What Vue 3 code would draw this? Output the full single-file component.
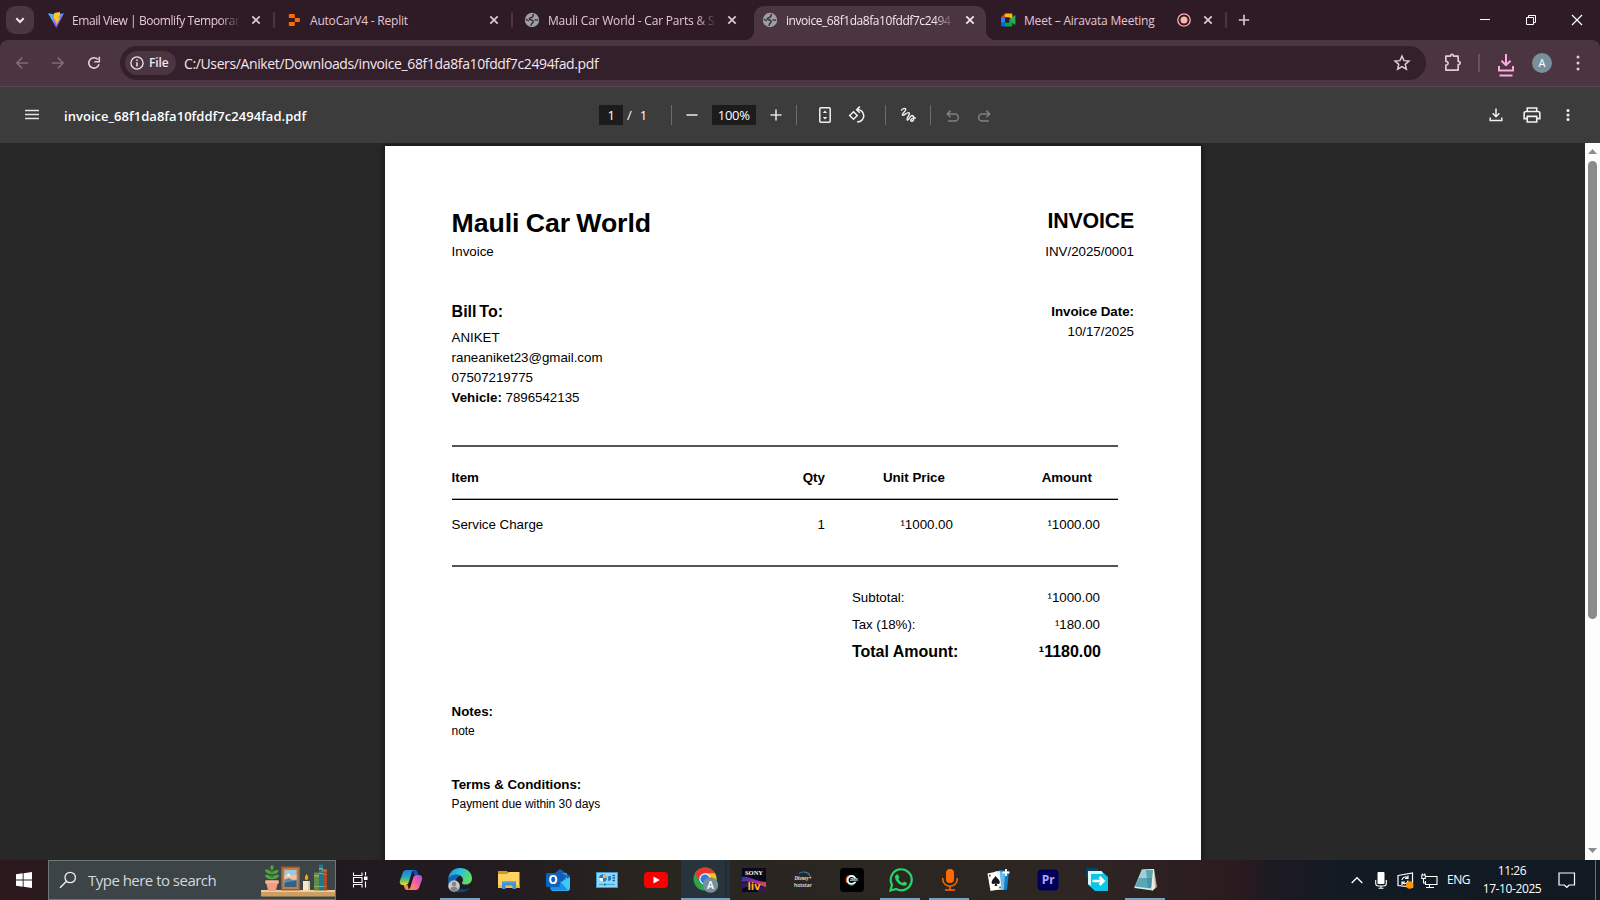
<script setup>
const tabs = [
  { id: 'vite', title: 'Email View | Boomlify Temporar', fade: true, cls: 't0' },
  { id: 'replit', title: 'AutoCarV4 - Replit', cls: 't1' },
  { id: 'globe', title: 'Mauli Car World - Car Parts & S', fade: true, cls: 't2' },
  { id: 'globe', title: 'invoice_68f1da8fa10fddf7c2494', fade: true, active: true, cls: 't3' },
  { id: 'meet', title: 'Meet – Airavata Meeting', rec: true, cls: 't4' },
]
const billTo = ['ANIKET', 'raneaniket23@gmail.com', '07507219775']
const totals = [
  { label: 'Subtotal:', value: '¹1000.00' },
  { label: 'Tax (18%):', value: '¹180.00' },
  { label: 'Total Amount:', value: '¹1180.00', strong: true },
]
</script>

<template>
  <div class="screen">
    <header class="tabstrip">
      <button class="tabsearch">
        <svg width="28" height="28" viewBox="0 0 28 28"><path d="M10.3 12.3l3.7 3.7 3.7-3.7" fill="none" stroke="#f3e4ec" stroke-width="2" /></svg>
      </button>
      <div v-for="(t, i) in tabs" :key="i" class="tab" :class="{ active: t.active, nosep: i === 2 }">
        <svg v-if="t.id === 'vite'" class="fav" viewBox="0 0 16 16">
          <defs><linearGradient id="vg" x1="0" y1="0" x2=".6" y2="1"><stop offset="0" stop-color="#41d1ff" /><stop offset="1" stop-color="#a53cf5" /></linearGradient></defs>
          <path d="M0 1.200L8.300 16 16 1.200 8.300 2.800z" fill="url(#vg)" />
          <path d="M11.800 0L6.200 1.100 5.700 7.600 7.700 7.200 7 10.300 8.600 9.800 7.800 13.500 12.300 6 10.300 6.300 12.300 1.800z" fill="#ffc81e" />
        </svg>
        <svg v-else-if="t.id === 'replit'" class="fav" viewBox="0 0 16 16">
          <path d="M3.600 2h4.400c.5 0 .8.3.8.8v3.300H3.600a.8.8 0 0 1-.8-.8V2.800c0-.5.3-.8.8-.8zM8.800 6.100h4.300c.5 0 .8.3.8.8v2.400c0 .5-.3.8-.8.8H8.800zM3.600 10.100h5.200v3.200c0 .5-.3.8-.8.8H3.600a.8.8 0 0 1-.8-.8v-2.400c0-.5.3-.8.8-.8z" fill="#ff6a00" />
        </svg>
        <svg v-else-if="t.id === 'globe'" class="fav" viewBox="0 0 16 16">
          <circle cx="8" cy="8" r="7.200" fill="#9aa0a6" />
          <path d="M9.800 2.200C8.500 3.200 9.500 4.300 8.200 5.200 7 6 5.500 5.600 5.300 6.800c-.1 1 1.500.8 2.700 1.300 1.500.6 1.300 2.200.2 3-.9.600-1.200 1.500-1 2.700" fill="none" stroke="#3f2b36" stroke-width="1.500" />
          <path d="M1.800 7.200c1 1 2.200 1 3 1.800M10.500 8.200c1.100-.5 2.400.2 3.700-.3" fill="none" stroke="#3f2b36" stroke-width="1.300" />
        </svg>
        <svg v-else class="fav" viewBox="0 0 16 16">
          <path d="M5 1.500V5.200H1z" fill="#ea4335" />
          <path d="M5 1.500h6.200c.7 0 1.200.5 1.200 1.200V8L9.200 5.200H5z" fill="#ffba00" />
          <path d="M1 5.200h4v5.600H1z" fill="#2684fc" />
          <path d="M1 10.800h4v3.700H2.200A1.200 1.200 0 0 1 1 13.300z" fill="#0066da" />
          <path d="M5 10.800h4.200V8l3.200 2.600v2.700c0 .7-.5 1.200-1.200 1.200H5z" fill="#00ac47" />
          <path d="M9.200 8l5.300-4.600c.4-.3.900-.1.900.4v8.400c0 .5-.5.700-.9.400z" fill="#2cb053" />
        </svg>
        <span class="ttl" :class="[{ fade: t.fade }, t.cls]">{{ t.title }}</span>
        <svg v-if="t.rec" class="rec" viewBox="0 0 16 16"><circle cx="8" cy="8" r="6.200" fill="none" stroke="#ffb4ab" stroke-width="1.300" /><circle cx="8" cy="8" r="3.500" fill="#ffb4ab" /></svg>
        <svg class="x" viewBox="0 0 16 16"><path d="M4.300 4.300l7.400 7.400M11.700 4.300l-7.400 7.400" fill="none" stroke="currentColor" stroke-width="1.700" /></svg>
      </div>
      <svg class="plus" viewBox="0 0 16 16"><path d="M8 2.800v10.400M2.800 8h10.400" fill="none" stroke="#e6c6d6" stroke-width="1.600" /></svg>
      <div class="wincontrols">
        <svg width="46" height="40" viewBox="0 0 46 40"><path d="M18 19.500h10" stroke="#fff" stroke-width="1" /></svg>
        <svg width="46" height="40" viewBox="0 0 46 40"><path d="M18.500 17.500h7v7h-7zM20.500 17.500v-2h7v7h-2" fill="none" stroke="#fff" /></svg>
        <svg width="46" height="40" viewBox="0 0 46 40"><path d="M18 15l10 10M28 15l-10 10" fill="none" stroke="#fff" stroke-width="1.200" /></svg>
      </div>
    </header>

    <nav class="navbar">
      <svg class="nav dim" viewBox="0 0 16 16"><path d="M14 8H3M8.200 2.600L2.800 8l5.400 5.400" fill="none" stroke="currentColor" stroke-width="1.600" /></svg>
      <svg class="nav dim" viewBox="0 0 16 16"><path d="M2 8h11M7.800 2.600L13.200 8l-5.400 5.400" fill="none" stroke="currentColor" stroke-width="1.600" /></svg>
      <svg class="nav" viewBox="0 0 16 16"><path d="M13 9.200A5.200 5.200 0 1 1 12 4.600" fill="none" stroke="currentColor" stroke-width="1.600" /><path d="M13.300 1.800v5H8.300" fill="none" stroke="currentColor" stroke-width="1.600" /></svg>
      <div class="omnibox">
        <div class="chip">
          <svg width="14" height="14" viewBox="0 0 14 14"><circle cx="7" cy="7" r="6.100" fill="none" stroke="#f1e2ea" stroke-width="1.300" /><path d="M7 6.200v4.200M7 3.400v1.500" stroke="#f1e2ea" stroke-width="1.500" /></svg>
          <span>File</span>
        </div>
        <span class="url">C:/Users/Aniket/Downloads/invoice_68f1da8fa10fddf7c2494fad.pdf</span>
        <svg class="star" viewBox="0 0 16 16"><path d="M8 1.900l1.800 4 4.400.4-3.300 2.900 1 4.300L8 11.200l-3.900 2.300 1-4.300-3.300-2.900 4.400-.4z" fill="none" stroke="#e6cbd8" stroke-width="1.300" /></svg>
      </div>
      <svg class="puzzle" viewBox="0 0 18 20"><path d="M2.500 3.800h4.300c-.3-2.100 3-2.100 2.700 0h4.200v4.700c2.400-.2 2.400 3.300 0 3v5H2.500v-4.700c2.700.2 2.700-3.400 0-3.300z" fill="none" stroke="#e6cbd8" stroke-width="1.500" stroke-linejoin="round" /></svg>
      <i class="vline"></i>
      <svg class="dl" viewBox="0 0 18 26"><path d="M9 2v11M4.500 8.700L9 13.200l4.500-4.500M2 14v4.500h14V14M2.500 23.500h13" fill="none" stroke="#ffa9e2" stroke-width="2" /></svg>
      <div class="avatar">A</div>
      <svg class="dots" viewBox="0 0 6 18"><circle cx="3" cy="3" r="1.500" /><circle cx="3" cy="9" r="1.500" /><circle cx="3" cy="15" r="1.500" /></svg>
    </nav>

    <section class="pdfbar">
      <svg class="burger" viewBox="0 0 14 12"><path d="M0 1.500h14M0 5.500h14M0 9.500h14" stroke="#e4e4e4" stroke-width="1.500" /></svg>
      <strong class="fname">invoice_68f1da8fa10fddf7c2494fad.pdf</strong>
      <div class="tools">
        <span class="box pg">1</span><span class="of">/</span><span class="tot">1</span>
        <i class="sep s1"></i>
        <svg class="ic12 minus" viewBox="0 0 12 12"><path d="M.5 6h11" stroke="#e0e0e0" stroke-width="1.600" /></svg>
        <span class="box zoom">100%</span>
        <svg class="ic12 add" viewBox="0 0 12 12"><path d="M.5 6h11M6 .5v11" stroke="#e0e0e0" stroke-width="1.600" /></svg>
        <i class="sep s2"></i>
        <svg class="fit" viewBox="0 0 14 18"><rect x="1.800" y="1.800" width="10.400" height="14.400" rx="1" fill="none" stroke="#f1f1f1" stroke-width="1.500" /><path d="M7 4.500L9.200 7H4.800zM7 13.500L9.200 11H4.800z" fill="#f1f1f1" /></svg>
        <svg class="rot" viewBox="0 0 18 18"><path d="M5.500 5.700L9.300 9.500 5.500 13.300 1.700 9.500z" fill="none" stroke="#f1f1f1" stroke-width="1.500" /><path d="M8.500 3.600a6.200 6.200 0 1 1 .7 12.300M11.800.6L8.700 3.700l3.100 3" fill="none" stroke="#f1f1f1" stroke-width="1.600" /></svg>
        <i class="sep s3"></i>
        <svg class="draw" viewBox="0 0 16 16"><path d="M1.500 3.200C3 1.200 5.800.6 5.700 2.700 5.500 4.700 1.600 6.200 2.400 8c1.100 1.500 4.700-3.400 6.700-2.200 1.800 1.500-3.200 4.900-1.900 7 1.300 1.600 2.500-4.500 5-4.300 2.500.5 2 5.300-.1 5.700-2.400.2-1.800-3.300 3.200-3.200" fill="none" stroke="#f1f1f1" stroke-width="1.400" stroke-linecap="round" /></svg>
        <i class="sep s4"></i>
        <svg class="undo" viewBox="0 0 12 12"><path d="M2 11h6.200a2.900 2.900 0 0 0 0-6.400H1.400M4.200 1.500L1.200 4.600l3 3" fill="none" stroke="#818181" stroke-width="1.400" /></svg>
        <svg class="redo" viewBox="0 0 12 12"><path d="M10 11H3.800a2.900 2.900 0 0 1 0-6.400h6.800M7.800 1.500l3 3.100-3 3" fill="none" stroke="#818181" stroke-width="1.400" /></svg>
      </div>
      <svg class="pdl" viewBox="0 0 14 14"><path d="M7 .5v8M3.600 5.300L7 8.700l3.400-3.400M1.200 9.500V12.400h11.600V9.500" fill="none" stroke="#f1f1f1" stroke-width="1.500" /></svg>
      <svg class="print" viewBox="0 0 16 16"><path d="M3.800 4.800V1.700h8.400v3.100M3.700 11.200H1V6.600c0-1 .7-1.700 1.700-1.700h10.600c1 0 1.700.7 1.700 1.700v4.600h-2.700M3.800 9.200h8.400v5H3.800z" fill="none" stroke="#f1f1f1" stroke-width="1.400" /></svg>
      <svg class="pdots" viewBox="0 0 4 14"><circle cx="2" cy="2.500" r="1.500" /><circle cx="2" cy="7" r="1.500" /><circle cx="2" cy="11.500" r="1.500" /></svg>
    </section>

    <main class="viewer">
      <article class="page">
        <div class="row head">
          <div><h1>Mauli Car World</h1><p>Invoice</p></div>
          <div class="r"><h2>INVOICE</h2><p>INV/2025/0001</p></div>
        </div>
        <div class="row bill">
          <div>
            <h3>Bill To:</h3>
            <p v-for="l in billTo" :key="l">{{ l }}</p>
            <p><b>Vehicle:</b> 7896542135</p>
          </div>
          <div class="r"><p><b>Invoice Date:</b></p><p>10/17/2025</p></div>
        </div>
        <div class="table">
          <div class="tr th"><span>Item</span><span>Qty</span><span>Unit Price</span><span>Amount</span></div>
          <div class="tr td"><span>Service Charge</span><span>1</span><span>¹1000.00</span><span>¹1000.00</span></div>
        </div>
        <div class="totals">
          <div v-for="t in totals" :key="t.label" :class="{ strong: t.strong }"><span>{{ t.label }}</span><span>{{ t.value }}</span></div>
        </div>
        <div class="note"><p><b>Notes:</b></p><p class="sm">note</p></div>
        <div class="note terms"><p><b>Terms &amp; Conditions:</b></p><p class="sm">Payment due within 30 days</p></div>
      </article>
      <div class="scrollbar">
        <svg width="15" height="18" viewBox="0 0 15 18"><path d="M3 11h9L7.500 6z" fill="#8b8b8b" /></svg>
        <div class="thumb"></div>
        <svg class="down" width="15" height="18" viewBox="0 0 15 18"><path d="M3 6h9l-4.500 5z" fill="#8b8b8b" /></svg>
      </div>
    </main>

    <footer class="taskbar">
      <div class="start"><svg width="16" height="16" viewBox="0 0 16 16"><path d="M0 2.200L6.700 1.300V7.500H0zM7.600 1.200L16 0v7.500H7.600zM0 8.400h6.700v6.300L0 13.800zM7.600 8.400H16V16l-8.400-1.200z" fill="#fff" /></svg></div>
      <div class="search">
        <svg width="18" height="18" viewBox="0 0 18 18"><circle cx="11.200" cy="6.500" r="5.200" fill="none" stroke="#f0f0f0" stroke-width="1.300" /><path d="M7.500 10.300L1 16.700" stroke="#f0f0f0" stroke-width="1.400" /></svg>
        <span>Type here to search</span>
        <svg class="shelf" width="74" height="36" viewBox="0 0 74 36">
          <path d="M0 27h74v2H0z" fill="#f1cd97" /><path d="M0 29h74v4.500H0z" fill="#cf9f62" />
          <path d="M11 20V6" stroke="#3b8b34" stroke-width="1.300" />
          <path d="M11 7c-2.500-1.500-2-4 0-5 2 1 2.500 3.500 0 5zM11 11C6 11.500 4 8.500 4 6.500 7.500 6 10.500 8 11 11zM11 11c.5-3 3.500-4.500 6.500-4C17.500 10 15 11.500 11 11zM11 16c-5 .5-6.500-2-7-4 3.500-.8 6.500.5 7 4zM11 16c.5-3.500 3.500-5 7-4-.5 3-3 4.500-7 4z" fill="#4fa63b" />
          <path d="M4.500 17.500h13v3.500h-1l-1.700 7H7.200l-1.700-7h-1z" fill="#eda184" /><path d="M4.500 17.500h13V20h-13z" fill="#f6b89c" />
          <path d="M20 3.500h19v24H20z" fill="#9a5d31" /><path d="M21.500 5h16v21h-16z" fill="#bd8049" /><path d="M23.500 7h12v17h-12z" fill="#9fc8dc" />
          <path d="M23.500 12h12v4h-12z" fill="#f7c2a0" /><circle cx="27.500" cy="12" r="1.500" fill="#fff1d0" /><path d="M23.500 17l4-2 8 4v5h-12z" fill="#5b8aa5" /><path d="M23.500 20l12-3v7h-12z" fill="#365f80" />
          <path d="M42 18h7v9.500h-7z" fill="#f6e7c7" /><path d="M47 18h2v9.500h-2z" fill="#dec9a0" /><path d="M45.500 11c2.700 3 2 6 0 6s-2.500-2.500 0-6z" fill="#ff9c22" />
          <path d="M53 9.500h5v18h-5z" fill="#5f8c4c" /><path d="M58 1.500h4v26h-4z" fill="#24758a" /><path d="M58 5h4v1.500h-4zM58 10h4v1h-4zM58 23h4v1h-4z" fill="#62b8bd" /><path d="M62 6.500h4v21h-4z" fill="#a64b2d" /><path d="M60.800 6.500h5v2h-5z" fill="#d06d35" /><path d="M62.300 11h3.400v1h-3.400zM62.300 23h3.400v1h-3.400z" fill="#d06d35" /><path d="M53 12h5v1.500h-5zM53 23h5v1h-5z" fill="#91ae6d" />
        </svg>
      </div>
      <div class="cell tv"><svg width="17" height="16" viewBox="0 0 17 16"><path d="M1.500.5v3h8.500v-3M1.500 15.500v-3h8.500v3M1.500 5.500h8.500v5H1.500zM13.500 0v3.500M13.500 9.500V15.500" fill="none" stroke="#fff" stroke-width="1.100" /><path d="M12 4.500h3.500V8H12z" fill="#fff" /></svg></div>
      <div class="cell"><svg width="24" height="24" viewBox="0 0 24 24">
        <defs>
          <linearGradient id="c1" x1="0" y1="0" x2="0" y2="1"><stop offset="0" stop-color="#1f7ee0" /><stop offset=".45" stop-color="#22a7c9" /><stop offset=".75" stop-color="#83c44c" /><stop offset="1" stop-color="#ffd33c" /></linearGradient>
          <linearGradient id="c2" x1="1" y1="0" x2="0" y2="1"><stop offset="0" stop-color="#a64de8" /><stop offset=".5" stop-color="#f26595" /><stop offset="1" stop-color="#ffa052" /></linearGradient>
        </defs>
        <path d="M14 2h2c1.600 0 2.200 1.200 2.700 2.700L19.300 7h-3.800z" fill="#1750c6" />
        <path d="M7.500 2h8.200c-2 0-2.800 1.700-3.300 3.500L10 13.600C9.500 15.500 8.400 17 6.300 17H4c-2.500 0-3.800-2-3-4.600L3.700 5C4.300 3.200 5.400 2 7.500 2z" fill="url(#c1)" />
        <path d="M16.500 22H8.300c2 0 2.800-1.700 3.300-3.500L14 10.400C14.500 8.500 15.600 7 17.700 7H20c2.500 0 3.600 2 3 4.600L20.300 19c-.6 1.800-1.700 3-3.800 3z" fill="url(#c2)" />
        <path d="M10 22H8c-1.600 0-2.200-1.200-2.700-2.700L4.700 17h3.800z" fill="#ff8a45" />
      </svg></div>
      <div class="cell run"><svg width="24" height="24" viewBox="0 0 24 24">
        <defs><linearGradient id="e1" x1="0" y1="0" x2="1" y2=".4"><stop offset="0" stop-color="#1c8fdd" /><stop offset=".5" stop-color="#2fc0dc" /><stop offset="1" stop-color="#5fdc63" /></linearGradient></defs>
        <path d="M.2 11C.8 4.600 5.500 0 12 0c7 0 12 4.800 12 10.200 0 4-3 6.300-6.300 6.300-2.600 0-4-.9-3.700-1.800.4-.9 1.200-1.500 1-3.400C14.500 8.500 11.800 6.600 8.500 6.700 4.500 6.700 1 9 .2 11z" fill="url(#e1)" />
        <path d="M.2 11C1 8.500 4.500 6.700 8.500 6.700c1.700 0 3.300.5 4.500 1.400-3.200-.2-5 2.500-5 5.400 0 5 4 8.400 8.500 8.300 2 0 3.800-.6 5.300-1.500C19.800 22.600 16 24 12 24 5 24-.6 18.200.2 11z" fill="#1064b8" />
        <path d="M8 13.500c0 5 4 8.400 8.500 8.300 2.600-.1 4-.8 5.300-1.600-2 3-6 3.900-9.500 3.800C8 22.500 6.500 17 8 13.500z" fill="#0b4186" />
        <circle cx="6" cy="18" r="5.800" fill="#c9c9c9" /><circle cx="6" cy="16" r="2.300" fill="#858585" /><path d="M2.200 21.500c.4-4 7.200-4 7.600 0-2 2-5.600 2-7.600 0z" fill="#858585" />
      </svg></div>
      <div class="cell"><svg width="24" height="24" viewBox="0 0 24 24"><path d="M1 3h9l2 2.500H1z" fill="#d99a18" /><path d="M1 5.500L10 5.500 12 4h10.500v16H1z" fill="#ffd35e" /><path d="M1 17h21.500v3H1z" fill="#f4bd3e" /><path d="M5 21v-8h14v8h-3.500v-3.500h-7V21z" fill="#3d93d8" /><path d="M5 13h14v1.500H5z" fill="#62aee6" /></svg></div>
      <div class="cell"><svg width="24" height="24" viewBox="0 0 24 24"><path d="M4 9L14 1l10 7v4H4z" fill="#1b5fb5" /><path d="M5 5h16v12H5z" fill="#2a9be8" /><path d="M12 3l9 5-6 7-7-5z" fill="#155bb0" /><path d="M24 9v11c0 1.700-1 3-3 3H6l-2-3L24 9z" fill="#40c8f4" /><path d="M4 20l10-7 8 9.500H6z" fill="#1d8fe3" /><rect x="0" y="5" width="14" height="14" rx="1.500" fill="#0c62c1" /><text x="7" y="16.200" text-anchor="middle" class="glyph" font-size="11.500" font-weight="700" fill="#fff">O</text></svg></div>
      <div class="cell"><svg width="24" height="24" viewBox="0 0 24 24"><rect x="1.500" y="4.500" width="21" height="15" fill="#8fd8fb" stroke="#3c9bd0" /><circle cx="8" cy="10" r="3.800" fill="#2379c4" /><path d="M8 10V6.200a3.800 3.800 0 0 1 3.800 3.800z" fill="#f7b53c" /><path d="M8 10v3.800A3.800 3.800 0 0 1 4.200 10z" fill="#fff" /><path d="M14 13V9h2M14 11h2M17.500 7.500H20M17.500 10H20M17.500 12.500H20" stroke="#1269ad" fill="none" stroke-width="1.400" /><path d="M4 16.500h16" stroke="#4aa7d9" stroke-width="1.200" /><path d="M10 15.500v2" stroke="#1269ad" stroke-width="1.500" /></svg></div>
      <div class="cell"><svg width="24" height="24" viewBox="0 0 24 24"><rect x="0" y="4" width="24" height="16" rx="4" fill="#f80000" /><path d="M9.500 8.500v7L15.800 12z" fill="#fff" /></svg></div>
      <div class="cell chrome"><svg width="26" height="26" viewBox="0 0 26 26">
        <circle cx="13" cy="12" r="11.500" fill="#2fa24b" /><path d="M3 6.300A11.500 11.500 0 0 1 23 6.300L13 7.500 8 15z" fill="#e6382e" /><path d="M23 6.300A11.500 11.500 0 0 1 13 23.500l5-8.700-5-8.500z" fill="#fcc21b" /><circle cx="13" cy="12" r="5.700" fill="#fff" /><circle cx="13" cy="12" r="4.500" fill="#3079ea" />
        <circle cx="18.500" cy="18" r="7.700" fill="#78909c" /><text x="18.500" y="21.800" text-anchor="middle" class="glyph" font-size="10.500" font-weight="600" fill="#fff">A</text>
      </svg></div>
      <div class="cell"><svg width="24" height="24" viewBox="0 0 24 24">
        <defs><linearGradient id="sl" x1="0" y1="0" x2="1" y2="1"><stop offset="0" stop-color="#2338a5" /><stop offset=".5" stop-color="#9a2ba8" /><stop offset="1" stop-color="#f0562d" /></linearGradient></defs>
        <path d="M0 0h24v24H0z" fill="#090819" /><path d="M0 9c8-1 11 4 24 5v5C14 17 9 12 0 14z" fill="url(#sl)" /><path d="M0 15c5-3 11 5 24 4v5h-7C12 20 7 17 0 21z" fill="#3b1660" /><text x="12" y="7" text-anchor="middle" class="serif" font-size="6" font-weight="700" fill="#fff" textLength="18" lengthAdjust="spacingAndGlyphs">SONY</text><text x="12" y="22" text-anchor="middle" class="glyph" font-size="11" font-weight="700" fill="#ffb51e" textLength="13" lengthAdjust="spacingAndGlyphs">liv</text>
      </svg></div>
      <div class="cell"><svg width="24" height="24" viewBox="0 0 24 24"><path d="M8 5.500C12.500 2.500 18.500 4.500 18.800 8" fill="none" stroke="#2384ad" stroke-width="1.200" /><text x="12" y="12" text-anchor="middle" class="serif" font-style="italic" font-size="6.500" font-weight="700" fill="#e8e8ea" textLength="17" lengthAdjust="spacingAndGlyphs">Disney+</text><text x="12" y="18.500" text-anchor="middle" class="glyph" font-size="5.800" font-weight="600" fill="#e8e8ea" textLength="18" lengthAdjust="spacingAndGlyphs">hotstar</text></svg></div>
      <div class="cell"><svg width="24" height="24" viewBox="0 0 24 24"><rect width="24" height="24" rx="3.500" fill="#000" /><circle cx="11.500" cy="12" r="4" fill="none" stroke="#fff" stroke-width="2.200" /><path d="M8.500 7.500a5.400 5.400 0 0 0-1.500 7.500" fill="none" stroke="#e4572e" stroke-width="1.200" /><path d="M8.500 16.300a5.200 5.200 0 0 0 5 .5" fill="none" stroke="#39a56a" stroke-width="1" /><path d="M11 10.300h7v3.400h-7z" fill="#000" /><text x="14" y="13.300" text-anchor="middle" class="glyph" font-size="3.500" font-weight="700" fill="#fff">ZEE5</text></svg></div>
      <div class="cell run"><svg width="24" height="24" viewBox="0 0 24 24"><path d="M1.500 22.500l1.500-5.700A10.500 10.500 0 1 1 7.200 21z" fill="none" stroke="#25d366" stroke-width="2.200" /><path d="M7.500 6.500h1.600l1.300 3-1 1.500c1 2 2.200 3.200 4.200 4l1.500-1.500 2.900 1.400c0 2-1.600 3.100-3.300 2.900C10 17 6.200 12.800 6 9.300c0-1.200.6-2.200 1.500-2.800z" fill="#25d366" /></svg></div>
      <div class="cell run"><svg width="24" height="24" viewBox="0 0 24 24"><rect x="8" y="1" width="8" height="14" rx="4" fill="#ff6a00" /><path d="M4.800 10v1.500a7.200 6.700 0 0 0 14.400 0V10M12 18.500V22M7 22h10" fill="none" stroke="#ff6a00" stroke-width="1.500" /></svg></div>
      <div class="cell"><svg width="26" height="24" viewBox="0 0 26 24"><path d="M13 2l10 1-2 19-10-1z" fill="#177bc6" /><path d="M9 3l10 1-1 18H8z" fill="#65bcf0" /><path d="M1.500 5.500L13.500 3l2 18-11 2z" fill="#fff" /><path d="M9.500 8c2 2.500 4.500 4 4.300 6.500-.2 1.700-2.300 2-3.300.8l.8 2.700H8.500l.8-2.700c-1 1.200-3.500.9-3.700-.8C5.400 12 8 10.500 9.500 8z" fill="#16181d" /><path d="M3 6.800l1.500-.3.200 2-1.400.2zM13.300 18.500l1.300-.2.200 2-1.300.2z" fill="#333" /><path d="M20 1v7M16.500 4.500h7" stroke="#fff" stroke-width="1.800" /></svg></div>
      <div class="cell"><svg width="24" height="24" viewBox="0 0 24 24"><rect x="1.500" y="1.500" width="21" height="21" rx="4" fill="#00005b" /><text x="12.300" y="15.800" text-anchor="middle" class="glyph" font-size="12" font-weight="700" fill="#b3a4ff" textLength="13">Pr</text></svg></div>
      <div class="cell"><svg width="24" height="24" viewBox="0 0 24 24"><path d="M1 0h12v4H6v11L1 9z" fill="#0e4264" /><path d="M3 3h13.500l6.500 6v14H10L3 16.500z" fill="#0cc6e6" /><path d="M3 3h13.500l1.500 3H6v12l-3-2z" fill="#d7f8fd" /><path d="M7.500 13h10.500M14.500 9l4 4-4 4" fill="none" stroke="#fff" stroke-width="2.600" /></svg></div>
      <div class="cell run"><svg width="24" height="24" viewBox="0 0 24 24"><path d="M8 2l12-1 3 18-5 4z" fill="#c7a66b" /><path d="M7.500 1.500L20 1l1 19-3 3z" fill="#e2eef0" /><path d="M7.500 2L19 2l-2 19L.5 19z" fill="#9fd0da" /><path d="M5 10l13 0-1 11L.5 19z" fill="#5ba5b5" /><path d="M12 2h7l-2 19-3-.3z" fill="#388998" opacity=".6" /><path d="M.5 18.500L17 20.500v1.700L.5 20z" fill="#d6eff3" /></svg></div>
      <div class="tray">
        <svg class="chev" width="12" height="8" viewBox="0 0 12 8"><path d="M.7 7L6 1.700 11.300 7" fill="none" stroke="#fff" stroke-width="1.300" /></svg>
        <svg class="mic" width="12" height="17" viewBox="0 0 12 17"><rect x="2.500" y="0" width="7" height="12" rx="1" fill="#fff" /><path d="M.7 8v3.500c0 1.500 1 2.500 2.800 2.500h5c1.800 0 2.800-1 2.800-2.500V8M6 14v2M3.500 16.200h5" fill="none" stroke="#fff" stroke-width="1.100" /></svg>
        <svg class="sync" width="17" height="17" viewBox="0 0 17 17"><path d="M1 3.500L15.500 1v14L1 13.500z" fill="none" stroke="#fff" stroke-width="1.200" /><path d="M5 8a3.300 3.300 0 0 1 5.500-2.200M11 3.500v3H8M11 8.500a3.300 3.300 0 0 1-5.500 2.200M5 13v-3h3" fill="none" stroke="#fff" stroke-width="1.200" /><circle cx="12.700" cy="13" r="3.700" fill="#ff9800" /></svg>
        <svg class="net" width="17" height="16" viewBox="0 0 17 16"><path d="M5 3.500h11v8H4.500V8M8.500 11.500v3M5 14.500h8M.8 2h3.500v3.500H.8zM2.500 5.500V10H5M1.500.5v1.500M3.700.5v1.500" fill="none" stroke="#fff" stroke-width="1.100" /></svg>
        <span class="eng">ENG</span>
        <div class="clock"><span>11:26</span><span class="date">17-10-2025</span></div>
        <svg class="act" width="18" height="17" viewBox="0 0 18 17"><path d="M1 1h15.500v12h-5.300L8.800 15.300 6.400 13H1z" fill="none" stroke="#fff" stroke-width="1.200" /></svg>
        <i class="peek"></i>
      </div>
    </footer>
  </div>
</template>

<style>
html, body { margin: 0; background: #282828; overflow: hidden; }
</style>

<style scoped>
* { box-sizing: border-box; }
svg { display: block; flex: none; overflow: visible; }
p, h1, h2, h3 { margin: 0; }
.screen { width: 1600px; height: 900px; display: flex; flex-direction: column; overflow: hidden; font-family: "Open Sans", "Noto Sans", sans-serif; }
.glyph { font-family: "Open Sans", sans-serif; }
.serif { font-family: "Liberation Serif", serif; }

.tabstrip { height: 50px; margin-bottom: -10px; padding-bottom: 10px; display: flex; align-items: center; background: #2e1b26; color: #e6c6d6; flex: none; }
.tabsearch { width: 28px; height: 28px; margin: 0 3px 0 6px; padding: 0; border: 0; border-radius: 9px; background: #4b3541; flex: none; }
.tab { position: relative; width: 238px; height: 40px; padding-left: 11px; display: flex; align-items: center; flex: none; }
.tab:not(.active):not(.nosep)::after { content: ""; position: absolute; right: 0; top: 12px; width: 2px; height: 16px; background: #4b3541; border-radius: 1px; }
.fav { width: 16px; height: 16px; margin-right: 8px; }
.ttl { width: 167px; font-size: 12px; line-height: 20px; white-space: nowrap; letter-spacing: -.2px; padding-top: 1px; }
.t0, .t3 { letter-spacing: -.44px; }
.fade { -webkit-mask-image: linear-gradient(90deg, #000 148px, transparent 169px); mask-image: linear-gradient(90deg, #000 148px, transparent 169px); }
.x { width: 16px; height: 16px; margin-left: 9px; }
.t4 { width: 152px; }
.rec { width: 16px; height: 16px; }
.rec + .x { margin-left: 8px; }
.active { color: #f5e6ee; }
.active > * { z-index: 1; }
.active::before { content: ""; position: absolute; left: 3px; right: 3px; top: 6px; bottom: 0; background: #4b3541; border-radius: 10px 10px 0 0; }
.active::after { content: ""; position: absolute; left: -7px; right: -7px; bottom: 0; height: 10px; background: radial-gradient(circle at 0 0, transparent 10px, #4b3541 10.500px) left / 10px 10px no-repeat, radial-gradient(circle at 100% 0, transparent 10px, #4b3541 10.500px) right / 10px 10px no-repeat; }
.plus { width: 16px; height: 16px; margin-left: 9px; }
.wincontrols { display: flex; margin-left: auto; }

.navbar { height: 47px; display: flex; align-items: center; background: #4b3541; border-bottom: 1px solid #5b4652; border-radius: 8px 8px 0 0; color: #e6cbd8; padding-bottom: 1px; padding-top: 1px; flex: none; position: relative; }
.nav { width: 16px; height: 16px; margin-left: 14px; margin-right: 6px; }
.nav + .nav { margin-left: 14px; }
.dim { color: #806a76; }
.omnibox { width: 1306px; height: 34px; margin-left: 12px; border-radius: 17px; background: #33202b; display: flex; align-items: center; padding-left: 5px; flex: none; }
.chip { width: 51px; height: 24px; border-radius: 12px; background: #4b3541; display: flex; align-items: center; padding-left: 5px; color: #f5e6ee; font-size: 12px; font-weight: 600; letter-spacing: -.1px; }
.chip span { margin-left: 5px; line-height: 20px; }
.url { margin-left: 8px; font-size: 14px; letter-spacing: -.375px; line-height: 24px; padding-top: 1px; color: #f5e6ee; white-space: nowrap; }
.star { width: 18px; height: 18px; margin-left: auto; margin-right: 15px; }
.puzzle { width: 20px; height: 22px; margin-left: 17px; }
.vline { width: 2px; height: 18px; background: #6a5060; margin-left: 15px; }
.dl { width: 18px; height: 26px; margin-left: 17px; margin-top: 3px; }
.avatar { width: 20px; height: 20px; border-radius: 50%; background: #78909c; color: #fff; font-size: 11px; text-align: center; line-height: 20px; margin-left: 17px; }
.dots { width: 6px; height: 18px; margin-left: 23px; fill: #e6cbd8; }

.pdfbar { height: 56px; background: #3c3c3c; display: flex; align-items: center; color: #fff; flex: none; padding-right: 30px; }
.burger { width: 14px; height: 12px; margin-left: 25px; }
.fname { margin-left: 25px; width: 535px; font-size: 13px; font-weight: 600; letter-spacing: .03px; line-height: 20px; padding-top: 1px; }
.tools { display: flex; align-items: center; height: 20px; flex: 1; font-size: 13px; line-height: 20px; }
.box { height: 20px; background: #1c1c1c; text-align: center; letter-spacing: -.3px; }
.pg { width: 24px; } .of { margin-left: 4px; } .tot { margin-left: 8px; width: 8px; }
.zoom { width: 44px; }
.sep { width: 1px; height: 20px; background: #6c6c6c; }
.s1 { margin-left: 23px; }
.ic12 { width: 12px; height: 12px; }
.minus { margin: 0 14px; } .add { margin-left: 14px; }
.s2 { margin-left: 14px; }
.fit { width: 14px; height: 18px; margin-left: 21px; }
.rot { width: 18px; height: 18px; margin-left: 16px; }
.s3 { margin-left: 19px; }
.draw { width: 16px; height: 16px; margin-left: 14px; }
.s4 { margin-left: 14px; }
.undo { width: 13px; height: 13px; margin-left: 15px; margin-top: 1px; }
.redo { width: 13px; height: 13px; margin-left: 19px; margin-top: 1px; }
.pdl { width: 14px; height: 14px; }
.print { width: 18px; height: 18px; margin-left: 20px; }
.pdots { width: 4px; height: 14px; margin-left: 25px; fill: #f1f1f1; }

.viewer { flex: 1; min-height: 0; display: flex; background: #282828; padding-left: 385px; overflow: hidden; }
.page { width: 816px; height: 1056px; margin-top: 3px; padding: 60px 67px 0 66.600px; background: #fff; color: #000; box-shadow: 0 0 6px 1px rgba(0, 0, 0, .5); font-family: "Liberation Sans", Arial, sans-serif; font-size: 13.330px; line-height: 20px; letter-spacing: -.02px; flex: none; }
.row { display: flex; justify-content: space-between; }
.r { text-align: right; }
.head { height: 96px; }
h1 { font-size: 26.670px; line-height: 30px; margin: 2px 0 4px; word-spacing: -1px; letter-spacing: -.07px; }
h2 { font-size: 21.330px; line-height: 30px; margin-bottom: 6px; letter-spacing: -.18px; }
h3 { font-size: 16px; line-height: 20px; margin-bottom: 6px; word-spacing: -1.500px; }
.bill { height: 143px; }
.table { width: 666.500px; border-top: 2px solid #555; border-bottom: 2px solid #555; }
.tr { display: grid; grid-template-columns: 300px 73.300px 128px 147px; }
.tr span:not(:first-child) { text-align: right; }
.th { font-weight: 700; padding: 21px 0 10px; border-bottom: 1px solid #000; box-shadow: inset 0 -1px #aaa; height: 53px; }
.th span:nth-child(n+3) { padding-right: 8px; }
.td { height: 65px; padding-top: 15px; }
.totals { margin: 21px 0 0 400.400px; width: 248px; }
.totals div { display: flex; justify-content: space-between; height: 27px; }
.totals .strong { font-size: 16px; font-weight: 700; width: 249px; }
.note { margin-top: 33px; height: 40px; }
.sm { font-size: 12px; line-height: 18px; letter-spacing: -.06px; }
.scrollbar { width: 15px; margin-left: auto; background: #fcfcfc; display: flex; flex-direction: column; align-items: center; }
.thumb { width: 9px; height: 458px; border-radius: 5px; background: #8b8b8b; }
.down { margin-top: auto; }

.taskbar { height: 40px; flex: none; display: flex; background: linear-gradient(90deg, #2c191d 0, #201a1f 330px, #221c20 500px, #29251f 650px, #2b2622 900px, #2e2624 1080px, #2c1b1d 1230px, #1d1a22 1270px, #121a24 1350px, #111923 1600px); color: #fff; }
.start { width: 48px; display: flex; align-items: center; justify-content: center; }
.search { width: 288px; background: #3d4447; border: 1px solid #707577; display: flex; align-items: center; padding-left: 10px; }
.search span { margin-left: 11px; font-size: 15px; line-height: 24px; color: #d5d8da; letter-spacing: -.52px; width: 140px; white-space: nowrap; }
.shelf { margin-left: auto; margin-top: 1px; }
.cell { position: relative; width: 48.950px; display: flex; align-items: center; justify-content: center; flex: none; }
.tv { width: 51px; padding-right: 3px; }
.run::after { content: ""; position: absolute; left: 4px; right: 5px; bottom: 0; height: 2px; background: #76a0c4; }
.chrome { background: linear-gradient(90deg, #27343b 44px, #1d272e 44px, #1d272e 45px, #26323a 45px); border-bottom: 2px solid #76a0c4; padding-top: 2px; }
.tray { display: flex; align-items: center; margin-left: auto; flex: none; width: 249px; }
.mic { margin-left: 12px; } .sync { margin-left: 10px; } .net { margin-left: 7px; margin-top: 2px; }
.eng { font-size: 12px; line-height: 20px; margin-left: 9px; width: 24px; letter-spacing: -.5px; }
.clock { display: flex; flex-direction: column; align-items: center; width: 60px; margin-left: 11px; font-size: 12px; line-height: 18px; letter-spacing: -.4px; white-space: nowrap; }
.act { margin-left: 16px; }
.peek { width: 1px; height: 40px; background: #6b7078; margin-left: auto; margin-right: 4px; }
</style>
